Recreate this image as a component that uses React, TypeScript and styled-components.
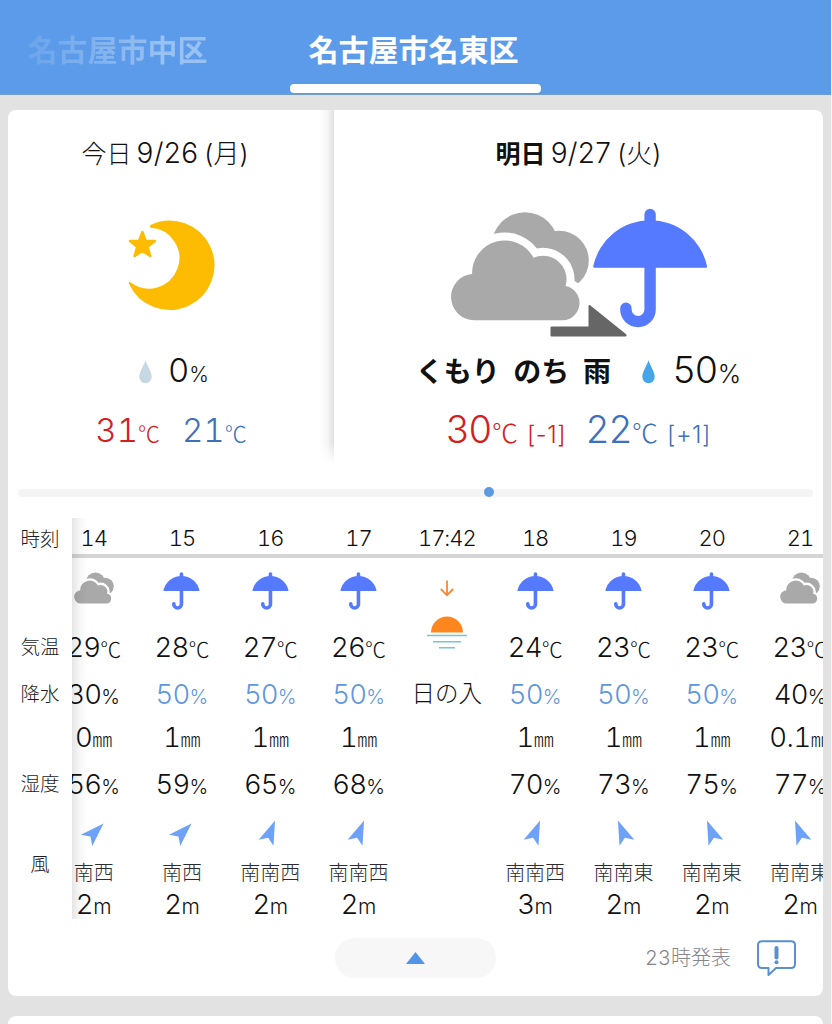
import React from "react";
import styled, {createGlobalStyle} from "styled-components";

const GlobalStyle = createGlobalStyle`
  * {
    box-sizing: border-box;
  }

  body {
    margin: 0;
    background: #f4f6f8;
    overflow: hidden;
  }
`;

const Page = styled.div`
  width: 831px;
  height: 1024px;
  overflow: hidden;
  background: #e2e2e2;
  color: #111;
  font-family: Inter, "Noto Sans CJK JP", sans-serif;
  font-weight: 300;
  font-variant-numeric: tabular-nums;
  white-space: nowrap;
`;

const Header = styled.header`
  display: flex;
  height: 95px;
  background: #5b9bea;
  border-bottom: 1px solid #6f9bd3;
`;

const Tab = styled.div<{$width: number}>`
  display: flex;
  flex-direction: column;
  align-items: center;
  width: ${p => p.$width}px;
  padding-top: 34px;
  font-size: 30px;
  line-height: 32px;
  font-weight: 700;
  color: #fff;
`;

const TabLabel = styled.span`
  margin-right: 4px;
`;

const FadedLabel = styled.span`
  background: linear-gradient(90deg, rgba(255, 255, 255, 0.1), rgba(255, 255, 255, 0.38) 75%);
  background-clip: text;
  -webkit-background-clip: text;
  color: transparent;
`;

const TabUnderline = styled.div`
  width: 251px;
  height: 9px;
  margin-top: 18px;
  border-radius: 4px;
  background: #fff;
`;

const Card = styled.section`
  width: 815px;
  height: 886px;
  margin: 15px 0 0 8px;
  border-radius: 8px;
  background: #fff;
  overflow: hidden;
`;

const NextCard = styled(Card)`
  margin-top: 20px;
`;

const Days = styled.div`
  display: flex;
  height: 379px;
`;

const Day = styled.div<{$width: number}>`
  display: flex;
  flex-direction: column;
  align-items: center;
  position: relative;
  width: ${p => p.$width}px;
  padding-top: 26px;
`;

const Tomorrow = styled(Day)`
  font-variant-numeric: proportional-nums;
`;

const DayShade = styled.div`
  position: absolute;
  top: 0;
  right: 0;
  width: 16px;
  height: 354px;
  background: linear-gradient(90deg, rgba(0, 0, 0, 0), rgba(0, 0, 0, 0.03) 55%, rgba(0, 0, 0, 0.12));
  mask-image: linear-gradient(#000 94%, transparent);
`;

const DateLine = styled.div<{$shift?: number}>`
  display: flex;
  align-items: baseline;
  height: 36px;
  line-height: 34px;
  font-size: 25px;
  font-variant-numeric: proportional-nums;
  margin-right: ${p => p.$shift || 0}px;
`;

const DayName = styled.span<{$strong?: boolean}>`
  font-weight: ${p => p.$strong ? 700 : 300};
  margin-right: 5px;
`;

const Digits = styled.span<{$size: number; $spacing?: number}>`
  font-size: ${p => p.$size}px;
  letter-spacing: ${p => p.$spacing || 0}px;
`;

const Weekday = styled.span`
  margin-left: 6px;
  font-size: 26px;
`;

const Picture = styled.div<{$drop: number}>`
  display: flex;
  align-items: center;
  justify-content: center;
  height: 173px;
  padding-top: ${p => p.$drop}px;
`;

const Summary = styled.div<{$shift?: number}>`
  display: flex;
  align-items: center;
  height: 54px;
  line-height: 56px;
  margin-left: ${p => p.$shift || 0}px;
`;

const Phrase = styled.span`
  font-size: 28px;
  font-weight: 700;
  word-spacing: 7px;
  margin-right: 31px;
`;

const Value = styled.span<{$color?: string; $gap?: number}>`
  display: inline-flex;
  align-items: baseline;
  color: ${p => p.$color || "inherit"};
  margin-left: ${p => p.$gap || 0}px;
`;

const Unit = styled.span<{$size: number}>`
  font-size: ${p => p.$size}px;
`;

const Celsius = styled(Unit)`
  font-family: "Noto Sans CJK JP", sans-serif;
`;

const Diff = styled.span`
  font-size: 24px;
  letter-spacing: 0.5px;
  margin-left: 9px;
`;

const Temps = styled.div`
  display: flex;
  align-items: baseline;
  height: 64px;
  line-height: 62px;
`;

const Track = styled.div`
  display: flex;
  align-items: center;
  width: 795px;
  height: 8px;
  margin-left: 10px;
  border-radius: 4px;
  background: #f4f4f4;
`;

const Thumb = styled.div`
  width: 10px;
  height: 10px;
  margin: -2px 0 0 466px;
  border-radius: 50%;
  background: #5b99e3;
`;

const Hourly = styled.div`
  display: flex;
  height: 401px;
  margin-top: 21px;
`;

const Labels = styled.div`
  width: 64px;
  font-size: 19.5px;
  text-align: center;
  color: #1c1c22;
`;

const Label = styled.div<{$height: number}>`
  height: ${p => p.$height}px;
  line-height: ${p => p.$height + 2}px;
`;

const Strip = styled.div`
  position: relative;
  flex: 1;
  overflow: hidden;
`;

const StripShade = styled.div`
  position: absolute;
  inset: 0 auto 0 0;
  width: 16px;
  background: linear-gradient(90deg, rgba(0, 0, 0, 0.1), rgba(0, 0, 0, 0.03) 50%, rgba(0, 0, 0, 0));
`;

const Hours = styled.div`
  display: grid;
  grid-template-columns: repeat(9, 88.3px);
  margin-left: -22.5px;
`;

const Cell = styled.div<{$height: number; $drop?: number; $color?: string}>`
  display: flex;
  align-items: center;
  justify-content: center;
  height: ${p => p.$height}px;
  line-height: ${p => p.$height - 4}px;
  padding-top: ${p => p.$drop || 0}px;
  color: ${p => p.$color || "inherit"};
`;

const TimeCell = styled.div`
  height: 40px;
  border-bottom: 4px solid #d5d5d5;
  padding-top: 3px;
  font-size: 22px;
  line-height: 35px;
  letter-spacing: -1px;
  text-align: center;
`;

const Direction = styled.div`
  height: 24px;
  font-size: 20px;
  line-height: 26px;
  text-align: center;
  color: #2c2c32;
`;

const SunsetIcons = styled.div`
  display: flex;
  flex-direction: column;
  align-items: center;
  height: 111px;
  padding-top: 22px;
  gap: 19px;
`;

const SunsetText = styled.div`
  height: 48px;
  line-height: 50px;
  font-size: 23.5px;
  text-align: center;
`;

const Footer = styled.div`
  display: grid;
  grid-template-columns: 327px 161px 1fr;
  align-items: center;
  height: 40px;
  margin-top: 19px;
`;

const CollapseButton = styled.button`
  display: flex;
  grid-column: 2;
  align-items: center;
  justify-content: center;
  height: 40px;
  border: none;
  border-radius: 20px;
  background: #f7f7f7;
`;

const Announced = styled.div`
  display: flex;
  align-items: center;
  justify-content: flex-end;
  gap: 26px;
  padding-right: 27px;
  font-size: 20px;
  line-height: 38px;
  color: #85858d;
`;

const MoonIcon = () => (
  <svg width="88" height="92" viewBox="127 220 88 92" fill="#fdbc02" stroke="#fdbc02" strokeLinejoin="round">
    <path strokeWidth="2" d="M151 225.8A43.7 43.7 0 1 1 129.8 283A31.4 31.4 0 1 0 151 226.8Z"/>
    <path strokeWidth="2.5" d="M142.4 232L145.6 240.7L154.9 241L147.6 246.8L150.2 256L142.4 250.7L134.6 256L137.2 246.8L129.9 241L139.2 240.7Z"/>
  </svg>
);

const Clouds = () => (
  <g fill="#a9a9a9">
    <circle cx="524.5" cy="245" r="33.2"/>
    <circle cx="558.5" cy="260" r="29.8"/>
    <path
      d="M473.5 319.7A23.2 23.2 0 0 1 471.6 273.4A32.6 32.6 0 0 1 533 257.3A23.5 23.5 0 0 1 565 285.6A17.2 17.2 0 0 1 562.4 319.7Z"
      stroke="#fff"
      strokeWidth="16"
      paintOrder="stroke"
      strokeLinejoin="round"
    />
  </g>
);

const Umbrella = () => (
  <g>
    <path
      d="M649.6 214V309A12.1 12.1 0 0 1 625.4 309V307.8"
      fill="none"
      stroke="#557aff"
      strokeWidth="11.4"
      strokeLinecap="round"
    />
    <path d="M594 267.3Q592.3 267.3 592.8 265.5A58.2 58.2 0 0 1 706.5 265.5Q707 267.3 705.3 267.3Z" fill="#557aff"/>
  </g>
);

const CloudThenRainIcon = () => (
  <svg width="258" height="130" viewBox="449.5 207.5 258 130">
    <Clouds/>
    <Umbrella/>
    <path
      d="M551 335V327H589V305.5L625 334.5V335Z"
      fill="#666"
      stroke="#666"
      strokeWidth="2"
      strokeLinejoin="round"
    />
  </svg>
);

const HourCloud = styled.svg`
  margin-bottom: 6px;
`;

const CloudIcon = () => (
  <HourCloud width="40" height="32" viewBox="450 211 139 109.5">
    <Clouds/>
  </HourCloud>
);

const UmbrellaIcon = () => (
  <svg width="37" height="38" viewBox="591.5 207.5 116.5 120">
    <Umbrella/>
  </svg>
);

const DropIcon = ({color}: {color: string}) => (
  <svg width="13" height="24" viewBox="0 0 13 24">
    <path d="M6.5 0.3C8.3 6 12.7 12 12.7 17A6.2 6.2 0 0 1 0.3 17C0.3 12 4.7 6 6.5 0.3Z" fill={color}/>
  </svg>
);

const DownIcon = () => (
  <svg width="14" height="17" viewBox="0 0 14 17" fill="none" stroke="#f58a35" strokeWidth="1.8">
    <path d="M7 0.5V15.2M0.8 9L7 15.2L13.2 9"/>
  </svg>
);

const SunsetIcon = () => (
  <svg width="40" height="34" viewBox="0 0 40 34">
    <path d="M4 16.5A16 16 0 0 1 36 16.5Z" fill="#fd861f"/>
    <path d="M0 19.5H40M6 25.7H34M12 31.8H28" stroke="#74c6d2" strokeWidth="1.5"/>
  </svg>
);

const WindIcon = ({angle}: {angle: number}) => (
  <svg width="28" height="28" viewBox="-14 -14 28 28">
    <path d="M0 -13.5L8 10.5L0 5L-8 10.5Z" fill="#6ea2f8" transform={`rotate(${angle})`}/>
  </svg>
);

const ReportIcon = () => (
  <svg width="39" height="37" viewBox="0 0 39 37" fill="none" stroke="#5b90cb" strokeWidth="2">
    <path d="M5 1.2H34Q38 1.2 38 5V24Q38 28 34 28H19L11.5 35V28H5Q1 28 1 24V5Q1 1.2 5 1.2Z" strokeLinejoin="round"/>
    <path d="M19.5 8V17.5" strokeWidth="4" strokeLinecap="round"/>
    <circle cx="19.5" cy="22.3" r="2" fill="#5b90cb" stroke="none"/>
  </svg>
);

type Hour = {
  time: string;
  sky: "cloud" | "rain";
  temp: number;
  chance: number;
  rain: string;
  humidity: number;
  angle: number;
  direction: string;
  wind: number;
};

const hoursBeforeSunset: Hour[] = [
  {time: "14", sky: "cloud", temp: 29, chance: 30, rain: "0", humidity: 56, angle: 45, direction: "南西", wind: 2},
  {time: "15", sky: "rain", temp: 28, chance: 50, rain: "1", humidity: 59, angle: 45, direction: "南西", wind: 2},
  {time: "16", sky: "rain", temp: 27, chance: 50, rain: "1", humidity: 65, angle: 22, direction: "南南西", wind: 2},
  {time: "17", sky: "rain", temp: 26, chance: 50, rain: "1", humidity: 68, angle: 22, direction: "南南西", wind: 2},
];

const hoursAfterSunset: Hour[] = [
  {time: "18", sky: "rain", temp: 24, chance: 50, rain: "1", humidity: 70, angle: 22, direction: "南南西", wind: 3},
  {time: "19", sky: "rain", temp: 23, chance: 50, rain: "1", humidity: 73, angle: -22, direction: "南南東", wind: 2},
  {time: "20", sky: "rain", temp: 23, chance: 50, rain: "1", humidity: 75, angle: -22, direction: "南南東", wind: 2},
  {time: "21", sky: "cloud", temp: 23, chance: 40, rain: "0.1", humidity: 77, angle: -22, direction: "南南東", wind: 2},
];

const HourColumn: React.FC<{hour: Hour}> = ({hour}) => (
  <div>
    <TimeCell>{hour.time}</TimeCell>
    <Cell $height={66}>{hour.sky === "cloud" ? <CloudIcon/> : <UmbrellaIcon/>}</Cell>
    <Cell $height={45} $drop={2}>
      <Value><Digits $size={27.5} $spacing={-0.8}>{hour.temp}</Digits><Celsius $size={21}>℃</Celsius></Value>
    </Cell>
    <Cell $height={48} $drop={4} $color={hour.chance >= 50 ? "#5f97de" : undefined}>
      <Value><Digits $size={27.5} $spacing={-0.8}>{hour.chance}</Digits><Unit $size={20}>%</Unit></Value>
    </Cell>
    <Cell $height={43} $drop={1}>
      <Value><Digits $size={27.5} $spacing={-0.5}>{hour.rain}</Digits><Unit $size={20}>㎜</Unit></Value>
    </Cell>
    <Cell $height={46} $drop={4}>
      <Value><Digits $size={27.5} $spacing={-0.8}>{hour.humidity}</Digits><Unit $size={20}>%</Unit></Value>
    </Cell>
    <Cell $height={54}><WindIcon angle={hour.angle}/></Cell>
    <Direction>{hour.direction}</Direction>
    <Cell $height={40} $drop={3}>
      <Value><Digits $size={27.5} $spacing={-0.5}>{hour.wind}</Digits><Unit $size={21}>m</Unit></Value>
    </Cell>
  </div>
);

const App: React.FC = () => (
  <>
    <GlobalStyle/>
    <Page>
      <Header>
        <Tab $width={235}><FadedLabel>名古屋市中区</FadedLabel></Tab>
        <Tab $width={361}><TabLabel>名古屋市名東区</TabLabel><TabUnderline/></Tab>
      </Header>
      <Card>
        <Days>
          <Day $width={326}>
            <DayShade/>
            <DateLine $shift={12}>
              <DayName>今日</DayName>
              <Digits $size={28} $spacing={0.3}>9/26</Digits>
              <Weekday>(月)</Weekday>
            </DateLine>
            <Picture $drop={15}><MoonIcon/></Picture>
            <Summary $shift={6}>
              <DropIcon color="#c5d8e4"/>
              <Value $gap={16}><Digits $size={33}>0</Digits><Unit $size={21}>%</Unit></Value>
            </Summary>
            <Temps>
              <Value $color="#d4201c"><Digits $size={33}>31</Digits><Celsius $size={22}>℃</Celsius></Value>
              <Value $color="#3d70bd" $gap={22}><Digits $size={33}>21</Digits><Celsius $size={22}>℃</Celsius></Value>
            </Temps>
          </Day>
          <Tomorrow $width={489}>
            <DateLine>
              <DayName $strong>明日</DayName>
              <Digits $size={28} $spacing={0.3}>9/27</Digits>
              <Weekday>(火)</Weekday>
            </DateLine>
            <Picture $drop={29}><CloudThenRainIcon/></Picture>
            <Summary>
              <Phrase>くもり のち 雨</Phrase>
              <DropIcon color="#44a5e8"/>
              <Value $gap={18}><Digits $size={37}>50</Digits><Unit $size={25}>%</Unit></Value>
            </Summary>
            <Temps>
              <Value $color="#d4201c">
                <Digits $size={37.5}>30</Digits><Celsius $size={26}>℃</Celsius><Diff>[-1]</Diff>
              </Value>
              <Value $color="#3d70bd" $gap={20}>
                <Digits $size={37.5}>22</Digits><Celsius $size={26}>℃</Celsius><Diff>[+1]</Diff>
              </Value>
            </Temps>
          </Tomorrow>
        </Days>
        <Track><Thumb/></Track>
        <Hourly>
          <Labels>
            <Label $height={40}>時刻</Label>
            <Label $height={66}/>
            <Label $height={45}>気温</Label>
            <Label $height={48}>降水</Label>
            <Label $height={43}/>
            <Label $height={46}>湿度</Label>
            <Label $height={115}>風</Label>
          </Labels>
          <Strip>
            <StripShade/>
            <Hours>
              {hoursBeforeSunset.map(hour => <HourColumn key={hour.time} hour={hour}/>)}
              <div>
                <TimeCell>17:42</TimeCell>
                <SunsetIcons><DownIcon/><SunsetIcon/></SunsetIcons>
                <SunsetText>日の入</SunsetText>
              </div>
              {hoursAfterSunset.map(hour => <HourColumn key={hour.time} hour={hour}/>)}
            </Hours>
          </Strip>
        </Hourly>
        <Footer>
          <CollapseButton>
            <svg width="19" height="12" viewBox="0 0 19 12"><path d="M9.5 0L19 12H0Z" fill="#5295e8"/></svg>
          </CollapseButton>
          <Announced>23時発表<ReportIcon/></Announced>
        </Footer>
      </Card>
      <NextCard/>
    </Page>
  </>
);

export default App;
